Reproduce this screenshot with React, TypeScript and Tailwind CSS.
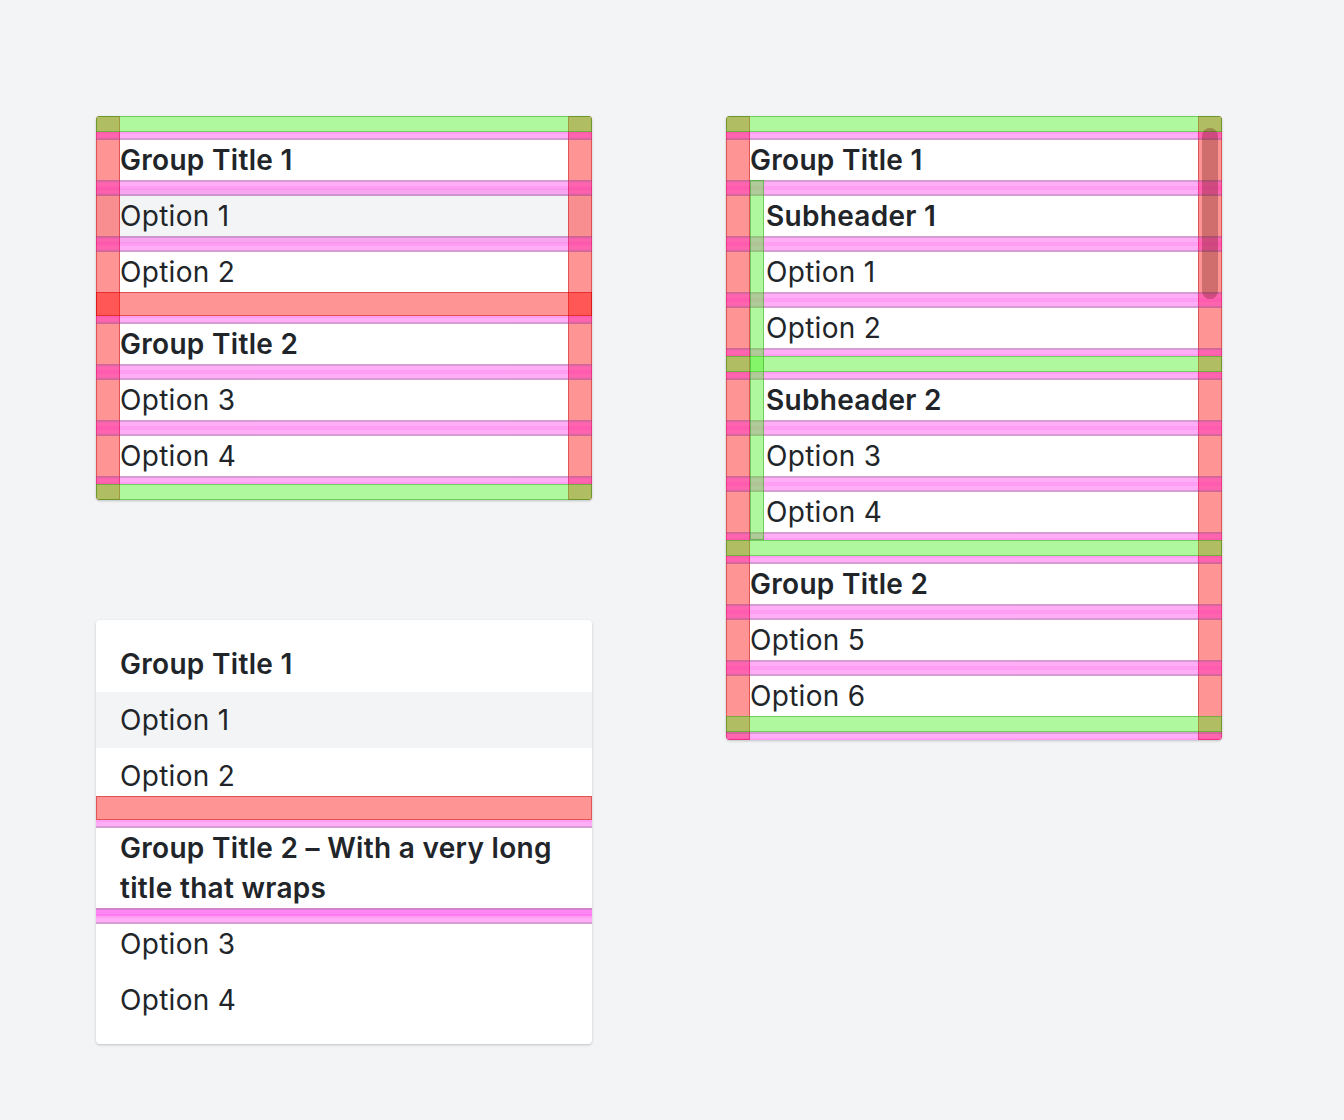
import React from "react";

const GREEN =
  "relative bg-[rgba(80,240,40,0.45)] border border-[rgba(40,150,20,0.45)]";
const RED = "bg-[rgba(255,0,0,0.42)] border border-[rgba(200,0,0,0.45)]";

function PadTop({ strong = false }: { strong?: boolean }) {
  return (
    <div
      className={
        "relative h-2 border-t-2 border-b-2 border-t-[rgba(255,0,200,0.08)] border-b-[rgba(90,110,100,0.25)] " +
        (strong ? "bg-[rgba(255,0,230,0.47)]" : "bg-[rgba(255,0,230,0.32)]")
      }
    />
  );
}

function PadBottom({ strong = false }: { strong?: boolean }) {
  return (
    <div
      className={
        "relative h-2 border-t-2 border-b-2 border-t-[rgba(90,110,100,0.25)] border-b-[rgba(255,0,200,0.08)] " +
        (strong ? "bg-[rgba(255,0,230,0.47)]" : "bg-[rgba(255,0,230,0.32)]")
      }
    />
  );
}

function Item({
  children,
  bold = false,
  gray = false,
  indent = false,
  top = true,
  bottom = true,
}: {
  children: React.ReactNode;
  bold?: boolean;
  gray?: boolean;
  indent?: boolean;
  top?: boolean;
  bottom?: boolean;
}) {
  return (
    <div className={gray ? "bg-[#f3f4f6]" : ""}>
      {top && <PadTop />}
      <div
        className={
          "h-10 leading-[40px] whitespace-nowrap " +
          (indent ? "pl-10 pr-6 " : "px-6 ") +
          (bold ? "font-semibold" : "font-normal")
        }
      >
        {children}
      </div>
      {bottom && <PadBottom />}
    </div>
  );
}

function PlainItem({
  children,
  bold = false,
  gray = false,
}: {
  children: React.ReactNode;
  bold?: boolean;
  gray?: boolean;
}) {
  return (
    <div
      className={
        "px-6 py-2 leading-[40px] " +
        (gray ? "bg-[#f3f4f6] " : "") +
        (bold ? "font-semibold" : "font-normal")
      }
    >
      {children}
    </div>
  );
}

const PANEL =
  "relative w-[496px] bg-white rounded-[4px] overflow-hidden shadow-[0_1px_3px_rgba(0,0,0,0.14),0_1px_2px_rgba(0,0,0,0.08)] text-[28px] tracking-[0.3px] text-[#212529] font-['Inter',sans-serif]";

function RedColumns() {
  return (
    <>
      <div className={"absolute left-0 top-0 bottom-0 w-6 " + RED} />
      <div className={"absolute right-0 top-0 bottom-0 w-6 " + RED} />
    </>
  );
}

function PanelOne() {
  return (
    <div className={PANEL}>
      <RedColumns />
      <div className={"h-4 " + GREEN} />
      <Item bold>Group Title 1</Item>
      <Item gray>Option 1</Item>
      <Item bottom={false}>Option 2</Item>
      <div className={"relative h-6 " + RED} />
      <Item bold>Group Title 2</Item>
      <Item>Option 3</Item>
      <Item>Option 4</Item>
      <div className={"h-4 " + GREEN} />
    </div>
  );
}

function PanelTwo() {
  return (
    <div className={PANEL}>
      <RedColumns />
      <div className={"h-4 " + GREEN} />
      <Item bold>Group Title 1</Item>
      <div className="relative">
        <Item bold indent>
          Subheader 1
        </Item>
        <Item indent>Option 1</Item>
        <Item indent>Option 2</Item>
        <div className={"h-4 " + GREEN} />
        <Item bold indent>
          Subheader 2
        </Item>
        <Item indent>Option 3</Item>
        <Item indent>Option 4</Item>
        <div
          className={
            "absolute left-6 -top-2 bottom-0 w-[14px] bg-[rgba(80,240,40,0.45)] border border-[rgba(40,150,20,0.45)]"
          }
        />
      </div>
      <div className={"h-4 " + GREEN} />
      <Item bold>Group Title 2</Item>
      <Item>Option 5</Item>
      <Item bottom={false}>Option 6</Item>
      <div className={"h-4 " + GREEN} />
      <PadBottom />
      <div className="absolute right-[4px] top-[12px] w-4 h-[171px] rounded-full bg-[rgba(100,20,20,0.3)]" />
    </div>
  );
}

function PanelThree() {
  return (
    <div className={PANEL + " pt-4 pb-4"}>
      <PlainItem bold>Group Title 1</PlainItem>
      <PlainItem gray>Option 1</PlainItem>
      <div className="px-6 pt-2 leading-[40px]">Option 2</div>
      <div className={"h-6 " + RED} />
      <PadTop />
      <div className="px-6 leading-[40px] font-semibold">
        Group Title 2 – With a very long title that wraps
      </div>
      <PadBottom strong />
      <PadTop />
      <div className="px-6 leading-[40px]">Option 3</div>
      <div className="h-2" />
      <PlainItem>Option 4</PlainItem>
    </div>
  );
}

export default function App() {
  return (
    <div className="min-h-[1120px] w-full bg-[#f3f4f6] pl-[96px] pt-[116px] flex items-start gap-[134px]">
      <div className="flex flex-col gap-[120px]">
        <PanelOne />
        <PanelThree />
      </div>
      <PanelTwo />
    </div>
  );
}
